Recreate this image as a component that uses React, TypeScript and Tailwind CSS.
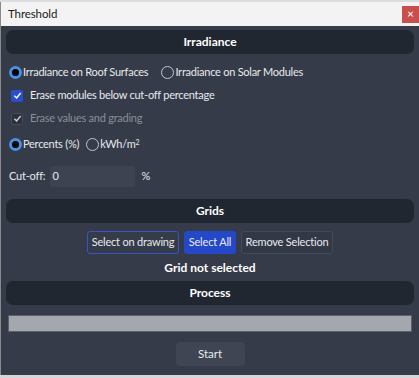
import React from 'react';

const font = { fontFamily: 'Lato, "Noto Sans", sans-serif' };

function SectionHeader({ title }: { title: string }) {
  return (
    <div className="h-[24px] rounded-[7px] bg-[#212731] flex items-center justify-center text-[12px] font-bold text-white">
      {title}
    </div>
  );
}

function Radio({ checked, label }: { checked: boolean; label: React.ReactNode }) {
  return (
    <label className="flex items-center text-[11px] tracking-[-0.25px] text-[#e8eaee] whitespace-nowrap">
      {checked ? (
        <span className="w-[13px] h-[13px] rounded-full bg-[#4a90e2] flex items-center justify-center">
          <span className="w-[7px] h-[7px] rounded-full bg-black" />
        </span>
      ) : (
        <span className="w-[13px] h-[13px] rounded-full border border-[#c4c7ce]" />
      )}
      <span className="ml-[1px]">{label}</span>
    </label>
  );
}

function Check({ disabled, label }: { disabled?: boolean; label: string }) {
  return (
    <label
      className={`flex items-center text-[11px] tracking-[-0.25px] whitespace-nowrap ${
        disabled ? 'text-[#8a8f99]' : 'text-[#e8eaee]'
      }`}
    >
      <span
        className={`w-[12px] h-[12px] rounded-[2px] flex items-center justify-center ${
          disabled ? 'bg-[#2c313c] border border-[#454b57]' : 'bg-[#2a4fcc]'
        }`}
      >
        <svg width="9" height="9" viewBox="0 0 10 10">
          <path
            d="M1.5 5.2 L4 7.6 L8.5 2.2"
            fill="none"
            stroke={disabled ? '#c9ccd2' : '#ffffff'}
            strokeWidth="1.6"
          />
        </svg>
      </span>
      <span className="ml-[7px]">{label}</span>
    </label>
  );
}

export default function App() {
  return (
    <div className="w-[419px] h-[378px] bg-[#d6d6d6] flex flex-col" style={font}>
      <div className="h-[2px] bg-[#dcdcdc]" />
      <div className="flex flex-col border-l border-[#8a8a8a]">
        <div className="h-[24px] bg-[#f3f3f3] flex items-center justify-between">
          <span className="ml-[7px] text-[11.5px] tracking-[-0.1px] text-[#1a1a1a]">Threshold</span>
          <div className="w-[17px] h-[17px] bg-[#c94f4f] flex items-center justify-center text-white text-[12px] leading-none">
            ×
          </div>
        </div>
        <div className="h-[349px] bg-[#353b48] px-[5px] pt-[4px] flex flex-col">
          <SectionHeader title="Irradiance" />
          <div className="flex items-center gap-[13px] mt-[11px] ml-[3px] h-[15px]">
            <Radio checked label="Irradiance on Roof Surfaces" />
            <Radio checked={false} label="Irradiance on Solar Modules" />
          </div>
          <div className="mt-[8px] ml-[5px] h-[15px] flex items-center">
            <Check label="Erase modules below cut-off percentage" />
          </div>
          <div className="mt-[8px] ml-[5px] h-[15px] flex items-center">
            <Check disabled label="Erase values and grading" />
          </div>
          <div className="flex items-center gap-[7px] mt-[11px] ml-[3px] h-[15px]">
            <Radio checked label="Percents (%)" />
            <Radio
              checked={false}
              label={
                <span>
                  kWh/m<sup className="text-[7px]">2</sup>
                </span>
              }
            />
          </div>
          <div className="flex items-center mt-[13px] ml-[3px] h-[22px] text-[11px] tracking-[-0.2px] text-[#e8eaee]">
            <span>Cut-off:</span>
            <div className="ml-[5px] w-[85px] h-[21px] rounded-[3px] bg-[#3d4350] flex items-center px-[2px]">
              0
            </div>
            <span className="ml-[6px]">%</span>
          </div>
          <div className="mt-[12px]">
            <SectionHeader title="Grids" />
          </div>
          <div className="flex justify-center gap-[5px] mt-[8px] text-[11px] tracking-[-0.2px] text-[#e8eaee] whitespace-nowrap">
            <button className="h-[23px] w-[92px] rounded-[3px] border border-[#3556c8] bg-[#353b48]">
              Select on drawing
            </button>
            <button className="h-[23px] w-[52px] rounded-[3px] bg-[#2548c8]">Select All</button>
            <button className="h-[23px] w-[92px] rounded-[3px] border border-[#444a56] bg-[#323845]">
              Remove Selection
            </button>
          </div>
          <div className="text-center text-[12px] font-bold text-white mt-[6px] leading-[16px]">
            Grid not selected
          </div>
          <div className="mt-[5px]">
            <SectionHeader title="Process" />
          </div>
          <div className="mt-[10px] mx-[2px] h-[17px] bg-[#a4a7ae] border border-[#5b606a]" />
          <div className="flex justify-center mt-[10px]">
            <button className="h-[24px] w-[69px] rounded-[4px] bg-[#3f4553] text-[11.5px] text-[#e8eaee]">
              Start
            </button>
          </div>
        </div>
      </div>
    </div>
  );
}
